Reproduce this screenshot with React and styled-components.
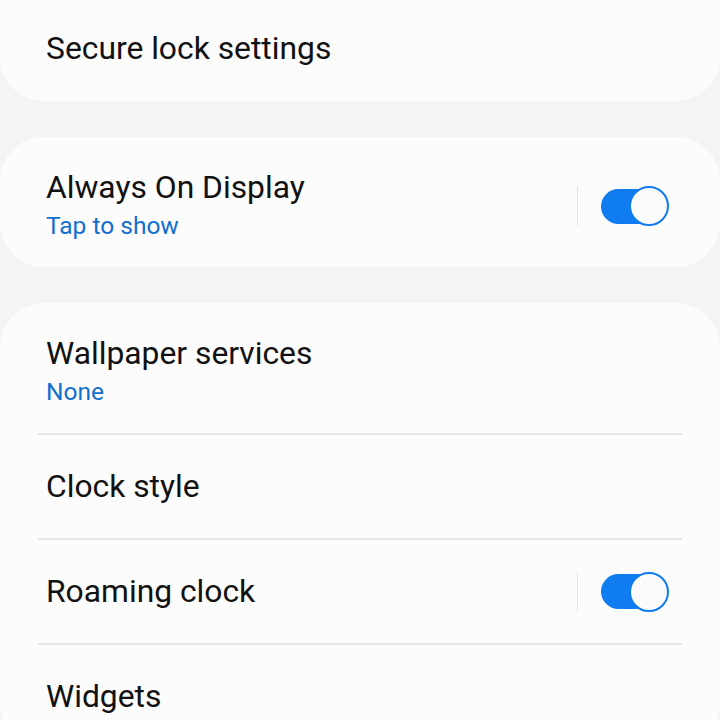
import styled, { createGlobalStyle } from "styled-components"

const GlobalStyle = createGlobalStyle`
  html, body {
    margin: 0;
    padding: 0;
    background: #f4f4f4;
    font-family: Roboto, "Noto Sans", "Liberation Sans", sans-serif;
    overflow: hidden;
  }
`

const Page = styled.div`
  display: flex;
  flex-direction: column;
  gap: 36px;
  width: 720px;
  height: 720px;
  overflow: hidden;
`

const Card = styled.div`
  background: #fcfcfc;
  border-radius: ${(p) => (p.$cutTop ? "0 0 44px 44px" : "44px")};
  flex-shrink: 0;
`

const Row = styled.div`
  display: flex;
  align-items: center;
  min-height: ${(p) => (p.$short ? "101px" : "103px")};
  padding: ${(p) => (p.$two ? "31px 51px 23px 46px" : "0 51px 0 46px")};
  box-sizing: border-box;
  padding-bottom: ${(p) => (p.$short ? "5px" : undefined)};
`

const Texts = styled.div`
  flex: 1;
  display: flex;
  flex-direction: column;
`

const Title = styled.div`
  font-size: 31.8px;
  line-height: 39px;
  color: #111;
`

const Sub = styled.div`
  font-size: 24.5px;
  line-height: 37px;
  color: #1170cf;
`

const Divider = styled.div`
  height: 2px;
  margin: 0 38px;
  background: #e6e6e6;
`

const Sep = styled.div`
  width: 1px;
  height: 40px;
  background: #e6e6e6;
  margin-right: 23px;
`

const Track = styled.div`
  position: relative;
  width: 68px;
  height: 40px;
  display: flex;
  align-items: center;
`

const Bar = styled.div`
  width: 60px;
  height: 35px;
  border-radius: 18px;
  background: #0f7cf0;
`

const Knob = styled.div`
  position: absolute;
  right: 0;
  top: 0;
  width: 36px;
  height: 36px;
  border-radius: 50%;
  border: 2px solid #0f7cf0;
  background: #fbfbfb;
`

const Toggle = () => (
  <>
    <Sep />
    <Track>
      <Bar />
      <Knob />
    </Track>
  </>
)

const Item = ({ title, sub, toggle, short }) => (
  <Row $two={!!sub} $short={short}>
    <Texts>
      <Title>{title}</Title>
      {sub && <Sub>{sub}</Sub>}
    </Texts>
    {toggle && <Toggle />}
  </Row>
)

export default function App() {
  return (
    <>
      <GlobalStyle />
      <Page>
        <Card $cutTop>
          <Item title="Secure lock settings" short />
        </Card>
        <Card>
          <Item title="Always On Display" sub="Tap to show" toggle />
        </Card>
        <Card>
          <Item title="Wallpaper services" sub="None" />
          <Divider />
          <Item title="Clock style" />
          <Divider />
          <Item title="Roaming clock" toggle />
          <Divider />
          <Item title="Widgets" />
        </Card>
      </Page>
    </>
  )
}
